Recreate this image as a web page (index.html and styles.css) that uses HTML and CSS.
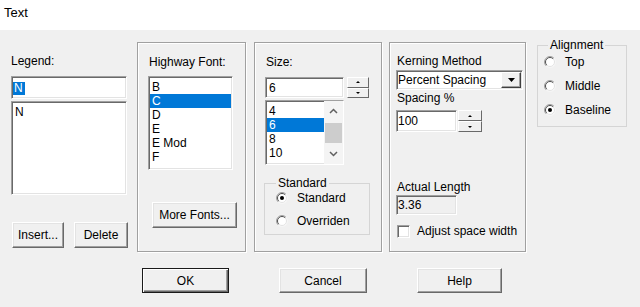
FILE: index.html
```html
<!DOCTYPE html>
<html>
<head>
<meta charset="utf-8">
<link rel="stylesheet" href="styles.css">
</head>
<body>
<svg class="defs" width="0" height="0">
  <symbol id="radio" viewBox="0 0 12 12">
    <circle cx="6" cy="6" r="5.5" fill="#fff" stroke="#f4f4f4"/>
    <path d="M2.1 9.9 A5.5 5.5 0 0 1 9.9 2.1" fill="none" stroke="#a0a0a0"/>
    <path d="M2.8 9.2 A4.5 4.5 0 0 1 9.2 2.8" fill="none" stroke="#505050"/>
    <path d="M9.2 2.8 A4.5 4.5 0 0 1 2.8 9.2" fill="none" stroke="#e3e3e3"/>
  </symbol>
  <symbol id="radio-on" viewBox="0 0 12 12">
    <circle cx="6" cy="6" r="5.5" fill="#fff" stroke="#f4f4f4"/>
    <path d="M2.1 9.9 A5.5 5.5 0 0 1 9.9 2.1" fill="none" stroke="#a0a0a0"/>
    <path d="M2.8 9.2 A4.5 4.5 0 0 1 9.2 2.8" fill="none" stroke="#505050"/>
    <path d="M9.2 2.8 A4.5 4.5 0 0 1 2.8 9.2" fill="none" stroke="#e3e3e3"/>
    <circle cx="6" cy="6" r="2" fill="#000"/>
  </symbol>
</svg>

<div class="titlebar">Text</div>

<div class="main">
  <div class="col legend-col">
    <div class="lbl">Legend:</div>
    <div class="sunken legend-edit"><span class="sel">N</span></div>
    <div class="sunken list legend-list"><div class="item">N</div></div>
    <div class="btnrow">
      <button class="btn insert">Insert...</button>
      <button class="btn delete">Delete</button>
    </div>
  </div>

  <div class="panel hw">
    <div class="lbl">Highway Font:</div>
    <div class="sunken list hw-list">
      <div class="item">B</div>
      <div class="item selected">C</div>
      <div class="item">D</div>
      <div class="item">E</div>
      <div class="item">E Mod</div>
      <div class="item">F</div>
    </div>
    <button class="btn more">More Fonts...</button>
  </div>

  <div class="panel sz">
    <div class="lbl">Size:</div>
    <div class="spinrow sz-row">
      <div class="sunken edit sz-edit">6</div>
      <div class="spin sz-spin">
        <div class="half"><i class="up"></i></div>
        <div class="half"><i class="down"></i></div>
      </div>
    </div>
    <div class="sunken sz-list">
      <div class="sz-items">
        <div class="item">4</div>
        <div class="item selected">6</div>
        <div class="item">8</div>
        <div class="item">10</div>
      </div>
      <div class="scroll">
        <div class="arrow"><svg width="9" height="6" viewBox="0 0 9 6"><polyline points="1,5 4.5,1.5 8,5" fill="none" stroke="#606060" stroke-width="1.5"/></svg></div>
        <div class="thumb"></div>
        <div class="arrow"><svg width="9" height="6" viewBox="0 0 9 6"><polyline points="1,1 4.5,4.5 8,1" fill="none" stroke="#606060" stroke-width="1.5"/></svg></div>
      </div>
    </div>
    <fieldset class="group std">
      <legend>Standard</legend>
      <div class="radio-row"><svg class="radio" width="12" height="12"><use href="#radio-on"/></svg><span>Standard</span></div>
      <div class="radio-row r2"><svg class="radio" width="12" height="12"><use href="#radio"/></svg><span>Overriden</span></div>
    </fieldset>
  </div>

  <div class="panel km">
    <div class="lbl">Kerning Method</div>
    <div class="sunken combo">
      <span class="combo-text">Percent Spacing</span>
      <div class="combo-btn"><svg width="7" height="4" viewBox="0 0 7 4"><polygon points="0,0 7,0 3.5,4" fill="#000"/></svg></div>
    </div>
    <div class="lbl sp-lbl">Spacing %</div>
    <div class="spinrow km-row">
      <div class="sunken edit km-edit">100</div>
      <div class="spin km-spin">
        <div class="half"><i class="up"></i></div>
        <div class="half"><i class="down"></i></div>
      </div>
    </div>
    <div class="lbl al-lbl">Actual Length</div>
    <div class="sunken edit readonly">3.36</div>
    <div class="check-row">
      <div class="sunken checkbox"></div>
      <span>Adjust space width</span>
    </div>
  </div>

  <fieldset class="group align">
    <legend>Alignment</legend>
    <div class="radio-row a1"><svg class="radio" width="12" height="12"><use href="#radio"/></svg><span>Top</span></div>
    <div class="radio-row a2"><svg class="radio" width="12" height="12"><use href="#radio"/></svg><span>Middle</span></div>
    <div class="radio-row a2"><svg class="radio" width="12" height="12"><use href="#radio-on"/></svg><span>Baseline</span></div>
  </fieldset>
</div>

<div class="actions">
  <button class="btn default ok">OK</button>
  <button class="btn cancel">Cancel</button>
  <button class="btn help">Help</button>
</div>
</body>
</html>
```

FILE: styles.css
```css
* { box-sizing: border-box; }

body {
  margin: 0;
  width: 640px;
  height: 307px;
  overflow: hidden;
  background: #f0f0f0;
  font: 12px/14px "Liberation Sans", Arial, sans-serif;
  color: #000;
}

.defs { position: absolute; width: 0; height: 0; }

.titlebar {
  height: 30px;
  background: #fff;
  padding: 5px 0 0 4px;
  font-size: 13px;
  line-height: 16px;
}

.main {
  display: flex;
  align-items: flex-start;
  padding: 12px 0 0 11px;
}

.col, .panel {
  display: flex;
  flex-direction: column;
  align-items: flex-start;
}

.lbl { line-height: 14px; white-space: nowrap; }

.sunken {
  background: #fff;
  border: 1px solid;
  border-color: #a0a0a0 #fff #fff #a0a0a0;
  box-shadow: inset 1px 1px #696969, inset -1px -1px #e3e3e3;
}

.btn {
  font: inherit;
  color: #000;
  background: #f0f0f0;
  border: 1px solid;
  border-color: #fff #696969 #696969 #fff;
  box-shadow: inset -1px -1px #a0a0a0, inset 1px 1px #e3e3e3;
  padding: 0;
  line-height: 14px;
}

.btn.default {
  border: 1px solid #1a1a1a;
  box-shadow: inset 1px 1px #fff, inset -1px -1px #696969, inset -2px -2px #a0a0a0;
}

.list { padding: 3px 1px 1px 1px; overflow: hidden; }
.item { height: 14px; line-height: 14px; padding-left: 2px; white-space: nowrap; }
.item.selected { background: #0078d7; color: #fff; }

/* Legend column */
.legend-col { width: 116px; margin-right: 10px; }
.legend-col .lbl { margin-top: 12px; }
.legend-edit { margin-top: 8px; width: 116px; height: 23px; padding: 4px 0 0 1px; }
.sel { display: inline-block; background: #0078d7; color: #fff; line-height: 13px; padding: 0 2px 0 1px; }
.legend-list { margin-top: 2px; width: 116px; height: 94px; }
.btnrow { display: flex; margin-top: 27px; }
.insert { margin-left: 1px; width: 52px; height: 26px; }
.delete { margin-left: 10px; width: 54px; height: 26px; }

/* Panels */
.panel {
  height: 210px;
  border: 1px solid #a0a0a0;
  box-shadow: inset 1px 1px #fff, 1px 1px #fff;
}

.hw { width: 109px; margin-right: 8px; padding-left: 10px; }
.hw .lbl { margin: 12px 0 0 1px; }
.hw-list { margin-top: 7px; width: 85px; height: 94px; }
.more { margin: 32px 0 0 4px; width: 85px; height: 26px; }

.sz { width: 128px; margin-right: 7px; padding-left: 10px; }
.sz .lbl { margin: 12px 0 0 1px; }
.spinrow { display: flex; }
.sz-row { margin-top: 8px; }
.edit { padding: 2px 0 0 3px; line-height: 16px; }
.sz-edit { width: 79px; height: 21px; }
.spin { display: flex; flex-direction: column; }
.sz-spin { margin-left: 3px; width: 22px; height: 21px; }
.spin .half {
  flex: 1;
  display: flex;
  align-items: center;
  justify-content: center;
  background: #f0f0f0;
  border: 1px solid;
  border-color: #fff #696969 #696969 #fff;
}
.spin i { display: block; width: 0; height: 0; border-left: 2px solid transparent; border-right: 2px solid transparent; }
.spin i.up { border-bottom: 2px solid #000; }
.spin i.down { border-top: 2px solid #000; }

.sz-list { margin-top: 2px; width: 79px; height: 65px; display: flex; overflow: hidden; }
.sz-items { width: 58px; padding: 3px 0 0 1px; }
.scroll { width: 19px; display: flex; flex-direction: column; background: #f4f4f4; }
.scroll .arrow { height: 20px; display: flex; align-items: center; justify-content: center; }
.scroll .thumb { margin: 2px 0 1px 1px; width: 17px; height: 20px; background: #cdcdcd; }

.group {
  margin: 0;
  padding: 0;
  min-width: 0;
  border: 1px solid #d5d5d5;
}
.group legend { margin-left: 0; padding: 0 2px; line-height: 14px; }

.std { margin: 11px 0 0 -1px; width: 106px; height: 59px; padding-left: 11px; }
.radio-row { display: flex; align-items: center; height: 16px; white-space: nowrap; }
.radio-row span { margin-left: 9px; }
.radio { display: block; }
.std .r2 { margin-top: 7px; }

.km { width: 137px; margin-right: 11px; padding-left: 6px; }
.km .lbl { margin: 11px 0 0 1px; }
.combo { margin-top: 2px; width: 127px; height: 20px; display: flex; align-items: flex-start; }
.combo-text { flex: 1; padding: 2px 0 0 1px; line-height: 15px; white-space: nowrap; }
.combo-btn {
  margin: 1px 1px 0 0;
  width: 20px;
  height: 16px;
  display: flex;
  align-items: center;
  justify-content: center;
  background: #f0f0f0;
  border: 1px solid;
  border-color: #fff #404040 #404040 #fff;
  box-shadow: inset -1px -1px #a0a0a0;
}
.km .sp-lbl { margin-top: 1px; }
.km-row { margin-top: 5px; }
.km-edit { width: 61px; height: 22px; padding-left: 1px; }
.km-spin { margin-left: 1px; width: 24px; height: 22px; }
.km .al-lbl { margin-top: 48px; }
.readonly { margin-top: 1px; width: 61px; height: 20px; background: #f0f0f0; padding: 1px 0 0 1px; }
.check-row { display: flex; align-items: center; margin-top: 9px; margin-left: 1px; white-space: nowrap; }
.checkbox { width: 13px; height: 13px; }
.check-row span { margin-left: 7px; }

.align { margin-top: -4px; width: 90px; height: 89px; padding-left: 6px; }
.align legend { margin-left: 4px; }
.align .a1 { margin-top: 2px; }
.align .a2 { margin-top: 8px; }

.actions { display: flex; padding-left: 142px; margin-top: 16px; }
.ok { width: 87px; height: 25px; }
.cancel { margin-left: 50px; width: 88px; height: 25px; }
.help { margin-left: 50px; width: 85px; height: 25px; }
```
